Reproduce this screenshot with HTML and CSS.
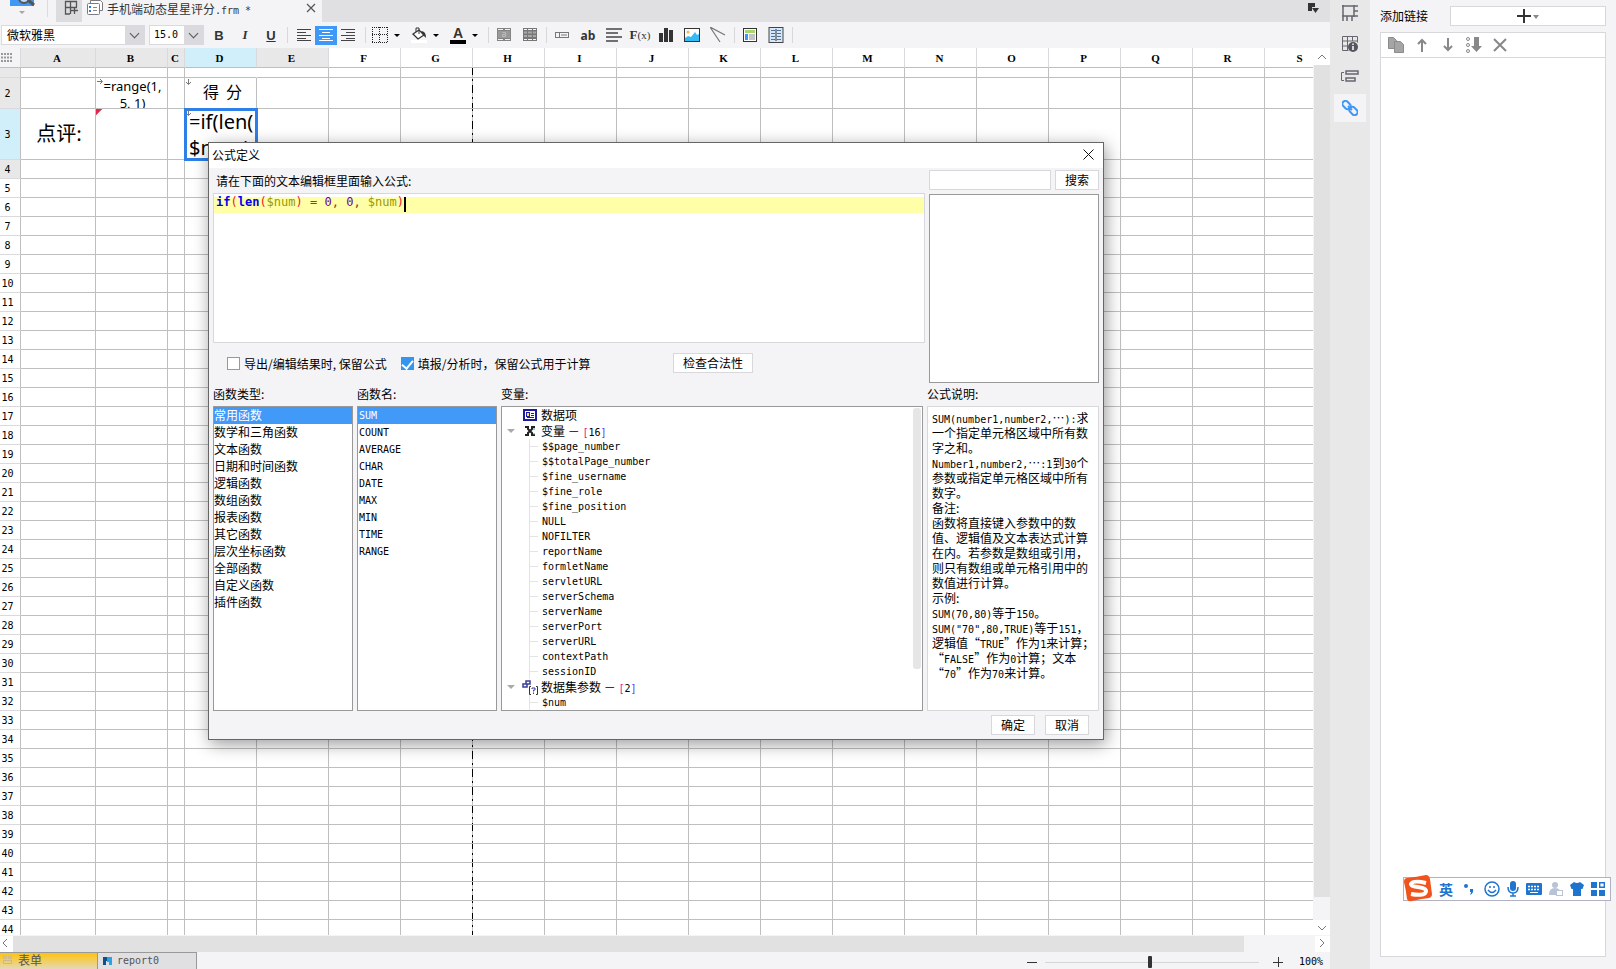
FILE: index.html
```html
<!DOCTYPE html>
<html lang="zh-CN">
<head>
<meta charset="utf-8">
<title>手机端动态星星评分.frm</title>
<link rel="stylesheet" href="styles.css">
</head>
<body>
<div class="app">
  <main class="workspace">
    <header class="tabbar">
      <button class="preview" aria-label="预览">
        <svg width="56" height="22" viewBox="0 0 56 22"><path d="M10 0h24v6H10z" fill="#3f98f6"/><circle cx="24" cy="-2" r="5" fill="#b9dcfb" stroke="#555" stroke-width="2"/><path d="M28 0l6 5" stroke="#555" stroke-width="3"/><path d="M19 11h6l-3 3z" fill="#a6a6aa"/><path d="M47.500 0v17" stroke="#dcdce0"/></svg>
      </button>
      <button class="newtab" aria-label="新建">
        <svg width="26" height="22" viewBox="0 0 26 22" fill="none" stroke="#555" stroke-width="1.300"><path d="M9 1.500h12M9 7.500h12M9.500 1v13H14M14.500 1v13M20.500 1v6M18.500 7v7M15 10.500h7"/></svg>
      </button>
      <div class="doctab">
        <svg width="18" height="18" viewBox="0 0 18 18" fill="#fff" stroke="#7b7b80"><path d="M4.500 1.500h10l2 2v8h-12z"/><rect x="1.500" y="4.500" width="12" height="11" rx="1"/><path d="M7 8.500h4M7 11.500h4" stroke="#888"/><path d="M3 7h2v2H3zM3 11h2v2H3z" fill="#2e7bd0" stroke="none"/></svg>
        <span>手机端动态星星评分<span class="m">.frm *</span></span>
        <button class="closetab" aria-label="关闭"><svg width="10" height="10" viewBox="0 0 10 10"><path d="M1 1l8 8M9 1L1 9" stroke="#555" stroke-width="1.200"/></svg></button>
      </div>
      <svg class="more" width="14" height="12" viewBox="0 0 14 12"><path d="M1 0h7v4H5v4H1z" fill="#333"/><path d="M5 5h7l-3.500 5z" fill="#333"/></svg>
    </header>

    <div class="toolbar">
      <div class="combo combo-font"><select aria-label="字体"><option>微软雅黑</option></select></div>
      <div class="combo combo-size"><select aria-label="字号" class="m"><option>15.0</option></select></div>
      <button class="t26 bold">B</button><button class="t26 ital">I</button><button class="t26 under">U</button>
      <i class="sep"></i>
      <div class="aligns">
        <button aria-label="左对齐"><svg width="14" height="14" viewBox="0 0 14 14" stroke="#444"><path d="M0 1.500h14M0 4.500h9M0 7.500h14M0 10.500h9M0 12.500h14"/></svg></button>
        <button class="on" aria-label="居中"><svg width="14" height="14" viewBox="0 0 14 14" stroke="#fff"><path d="M0 1.500h14M3 4.500h8M0 7.500h14M3 10.500h8M0 12.500h14"/></svg></button>
        <button aria-label="右对齐"><svg width="14" height="14" viewBox="0 0 14 14" stroke="#444"><path d="M0 1.500h14M5 4.500h9M0 7.500h14M5 10.500h9M0 12.500h14"/></svg></button>
      </div>
      <i class="sep"></i>
      <button class="drop" aria-label="边框"><svg width="16" height="16" viewBox="0 0 16 16" fill="none" stroke="#222" stroke-dasharray="1 1"><path d="M.5 0v16M15.500 0v16M0 .5h16M0 15.500h16M7.500 0v16M0 7.500h16"/></svg><svg class="caret" width="6" height="3" viewBox="0 0 6 3"><path d="M0 0h6L3 3z"/></svg></button>
      <button class="drop" aria-label="填充"><svg width="16" height="16" viewBox="0 0 16 16"><path d="M0 13h16v3H0z" fill="#fff"/><path d="M2 7l6-4 5 5-6 4z" fill="#fff" stroke="#333" stroke-width="1.300"/><path d="M5 5V1h3v6" fill="none" stroke="#333"/><path d="M10 4q5 0 5 7l-3-3z" fill="#333"/></svg><svg class="caret" width="6" height="3" viewBox="0 0 6 3"><path d="M0 0h6L3 3z"/></svg></button>
      <button class="drop" aria-label="字色"><span class="fontcolor">A</span><svg class="caret" width="6" height="3" viewBox="0 0 6 3"><path d="M0 0h6L3 3z"/></svg></button>
      <i class="sep"></i>
      <button class="t26" aria-label="合并"><svg width="14" height="14" viewBox="0 0 14 14"><path d="M0 0h14v13H0z" fill="#848484"/><path d="M1 1.500h5M8 1.500h5M1 11.500h5M8 11.500h5" stroke="#f0f0f2"/><rect x="1" y="3" width="12" height="7" fill="#999"/><path d="M5.500 4.500h3v4h-3v-2h3" fill="none" stroke="#bbb"/></svg></button>
      <button class="t26" aria-label="拆分"><svg width="14" height="14" viewBox="0 0 14 14"><path d="M0 0h14v13H0z" fill="#777"/><path d="M1 1.500h3M5 1.500h4M10 1.500h3M1 11.500h3M5 11.500h4M10 11.500h3" stroke="#f4f4f7"/><path d="M1 4.500h3M5 4.500h4M10 4.500h3M1 8h3M5 8h4M10 8h3" stroke="#a8a8a8" stroke-width="2"/></svg></button>
      <i class="sep"></i>
      <button class="t26" aria-label="控件"><svg width="14" height="6" viewBox="0 0 14 6" fill="none" stroke="#777"><rect x=".5" y=".5" width="13" height="5"/><path d="M4.500 1v4M6 3h6"/></svg></button>
      <button class="t26 ab">ab</button>
      <button class="t26" aria-label="段落"><svg width="16" height="14" viewBox="0 0 16 14" stroke="#444" stroke-width="1.500"><path d="M0 1h16M0 5h12M0 9h16M0 13h12"/></svg></button>
      <button class="t26 fx">F<small>(x)</small></button>
      <button class="t26" aria-label="图表"><svg width="14" height="14" viewBox="0 0 14 14" fill="#333"><path d="M0 5h4v9H0zM5 0h4v14H5zM10 2h4v12h-4z"/></svg></button>
      <button class="t26" aria-label="图片"><svg width="16" height="14" viewBox="0 0 16 14"><rect x=".5" y=".5" width="15" height="13" fill="#fff" stroke="#333"/><circle cx="4" cy="4" r="1.500" fill="#f6b64b"/><path d="M1 10l3-2 3 1 4-5 2 3 2-1v7H1z" fill="#36baf5"/></svg></button>
      <button class="t26" aria-label="斜线"><svg width="16" height="16" viewBox="0 0 16 16" stroke="#777" stroke-width="1.200"><path d="M0 0l15 8M0 0l10 15"/></svg></button>
      <i class="sep"></i>
      <button class="t26" aria-label="子报表"><svg width="14" height="14" viewBox="0 0 14 14"><rect x=".5" y=".5" width="13" height="13" fill="#fff" stroke="#333"/><path d="M2 2h10v3H2z" fill="#a5d86a"/><path d="M2 6h3v6H2z" fill="#3f98f6"/><path d="M6 6h6v6H6z" fill="#c4c4c8"/></svg></button>
      <button class="t26" aria-label="列表"><svg width="16" height="16" viewBox="0 0 16 16"><rect x="1" y=".5" width="14" height="15" fill="#d4e7fb" stroke="#444"/><path d="M8 2v12" stroke="#333"/><path d="M3 3.500h4M3 6.500h4M3 9.500h4M3 12.500h4M9 3.500h4M9 6.500h4M9 9.500h4M9 12.500h4" stroke="#4f7390"/></svg></button>
      <i class="sep"></i>
    </div>

    <section class="sheet">
      <div class="cells"><table class="grid" id="grid"></table></div>
      <div class="vscroll">
        <button aria-label="向上"><svg width="10" height="6" viewBox="0 0 10 6"><path d="M1 5l4-4 4 4" fill="none" stroke="#777"/></svg></button>
        <div class="vthumb"></div>
        <button aria-label="向下"><svg width="10" height="6" viewBox="0 0 10 6"><path d="M1 1l4 4 4-4" fill="none" stroke="#777"/></svg></button>
      </div>
    </section>
    <div class="hscroll">
      <button aria-label="向左"><svg width="6" height="10" viewBox="0 0 6 10"><path d="M5 1L1 5l4 4" fill="none" stroke="#777"/></svg></button>
      <div class="hthumb"></div>
      <button aria-label="向右"><svg width="6" height="10" viewBox="0 0 6 10"><path d="M1 1l4 4-4 4" fill="none" stroke="#777"/></svg></button>
    </div>
    <footer class="bottom">
      <button class="sheettab current"><svg width="10" height="8" viewBox="0 0 10 8" fill="none" stroke="#c9b98c"><path d="M.5.5h3v2h-3zM5.500.5h3v2h-3zM.5 4.500h8v3h-8z"/></svg>表单</button>
      <button class="sheettab"><svg width="9" height="8" viewBox="0 0 9 8"><path d="M0 0h4v4H3v4H0z" fill="#0f4f8f"/><path d="M4 0h5v8H6V5H4z" fill="#2aa3df"/></svg><span class="m">report0</span></button>
      <div class="zoom">
        <button aria-label="缩小"><svg width="10" height="10" viewBox="0 0 10 10"><path d="M0 5.500h10" stroke="#333"/></svg></button>
        <input type="range" min="0" max="100" value="49" aria-label="缩放">
        <button aria-label="放大"><svg width="10" height="10" viewBox="0 0 10 10"><path d="M0 5.500h10M5.500 0v10" stroke="#333"/></svg></button>
        <span class="m">100%</span>
      </div>
    </footer>
  </main>

  <nav class="rail">
    <button aria-label="单元格属性"><svg width="16" height="16" viewBox="0 0 16 16" fill="none" stroke="#666670" stroke-width="1.500"><path d="M0 1h16M1 0v16M0 11h16M12 0v12M12 6h4M5 11v5M10 11v5"/></svg></button>
    <button aria-label="单元格元素"><svg width="16" height="16" viewBox="0 0 16 16" fill="none" stroke="#666670"><path d="M.5.5h15v6M.5.5v14h6M0 5h15M0 10h6M5.500 0v14M10.500 0v5" /><circle cx="11" cy="11" r="5" fill="#555560" stroke="none"/><path d="M11 7.500v1.500M11 10v4" stroke="#fff" stroke-width="1.500"/></svg></button>
    <button aria-label="浮动元素"><svg width="18" height="13" viewBox="0 0 18 13" fill="none" stroke="#666670"><path d="M3 2.500H.5v8H3"/><path d="M5 1h12v3H5zM5 8h9v3H5z" stroke-width="1.500"/></svg></button>
    <button class="on" aria-label="超级链接"><svg width="16" height="16" viewBox="0 0 16 16" fill="none" stroke="#3f98f6" stroke-width="2"><rect x="0" y="2" width="9" height="6" rx="3" transform="rotate(45 4.500 5)"/><rect x="7" y="8" width="9" height="6" rx="3" transform="rotate(45 11.500 11)"/><path d="M6 6l4 4"/></svg></button>
  </nav>

  <aside class="panel">
    <div class="addrow"><span>添加链接</span>
      <button aria-label="添加"><svg width="22" height="14" viewBox="0 0 22 14"><path d="M0 7h14M7 0v14" stroke="#333" stroke-width="2"/><path d="M16 6h6l-3 4z" fill="#888"/></svg></button>
    </div>
    <div class="linkbox">
      <div class="linktools">
        <button aria-label="复制"><svg width="16" height="16" viewBox="0 0 16 16" fill="#a5a5a5" stroke="#8b8b8b"><path d="M.5.5h5l3 3v8h-8z"/><path d="M6.500 4.500h6l3 3v8h-9z"/></svg></button>
        <button aria-label="上移"><svg width="10" height="14" viewBox="0 0 10 14" fill="none" stroke="#888" stroke-width="2"><path d="M5 14V2M1 6l4-4 4 4"/></svg></button>
        <button aria-label="下移"><svg width="10" height="14" viewBox="0 0 10 14" fill="none" stroke="#888" stroke-width="2"><path d="M5 0v12M1 8l4 4 4-4"/></svg></button>
        <button aria-label="排序"><svg width="16" height="16" viewBox="0 0 16 16" fill="none" stroke="#888"><circle cx="2" cy="2" r="1.500"/><circle cx="2" cy="8" r="1.500"/><circle cx="2" cy="14" r="1.500"/><path d="M8 0h5v9h3l-5.500 6L5 9h3z" fill="#888" stroke="none"/></svg></button>
        <button aria-label="删除"><svg width="14" height="14" viewBox="0 0 14 14" stroke="#888" stroke-width="2"><path d="M1 1l12 12M13 1L1 13"/></svg></button>
      </div>
    </div>
  </aside>
</div>

<div class="dialog" role="dialog" aria-label="公式定义">
  <header class="dlg-title"><span>公式定义</span><button aria-label="关闭"><svg width="11" height="11" viewBox="0 0 11 11"><path d="M.5.5l10 10M10.500.5l-10 10" stroke="#111"/></svg></button></header>
  <div class="dlg-body">
    <div class="upper">
      <div class="left">
        <div class="prompt" id="prompt">请在下面的文本编辑框里面输入公式:</div>
        <div class="editor" contenteditable="true" role="textbox" aria-labelledby="prompt" spellcheck="false"><div class="code"><b>if</b><i class="r">(</i><b>len</b><i class="r">(</i><i class="v">$num</i><i class="r">)</i> <i class="o">=</i> <i class="n">0</i><i class="o">,</i> <i class="n">0</i><i class="o">,</i> <i class="v">$num</i><i class="r">)</i><i class="cursor"></i></div></div>
        <div class="options">
          <label class="check"><input type="checkbox">导出/编辑结果时, 保留公式</label>
          <label class="check"><input type="checkbox" checked>填报/分析时，保留公式用于计算</label>
          <button class="btn verify">检查合法性</button>
        </div>
      </div>
      <div class="right">
        <div class="search"><input type="text" aria-label="搜索函数"><button class="btn">搜索</button></div>
        <div class="results"></div>
      </div>
    </div>
    <div class="lower">
      <section class="c140"><h2>函数类型:</h2>
        <ul class="list" role="listbox"><li class="sel">常用函数</li><li>数学和三角函数</li><li>文本函数</li><li>日期和时间函数</li><li>逻辑函数</li><li>数组函数</li><li>报表函数</li><li>其它函数</li><li>层次坐标函数</li><li>全部函数</li><li>自定义函数</li><li>插件函数</li></ul></section>
      <section class="c140"><h2>函数名:</h2>
        <ul class="list names m" role="listbox"><li class="sel">SUM</li><li>COUNT</li><li>AVERAGE</li><li>CHAR</li><li>DATE</li><li>MAX</li><li>MIN</li><li>TIME</li><li>RANGE</li></ul></section>
      <section class="ctree"><h2>变量:</h2>
        <div class="treebox">
          <ul class="tree">
            <li class="branch"><i class="tog"></i><svg width="14" height="12" viewBox="0 0 14 12"><rect x="1" y="1" width="12" height="10" fill="#fff" stroke="#1c1c9c" stroke-width="2"/><rect x="3.500" y="3.500" width="3" height="4" fill="#ffe14a" stroke="#1c1c9c"/><path d="M8 4.500h3M8 6.500h3M4 8.500h7" stroke="#1c1c9c"/></svg><span>数据项</span></li>
            <li class="branch"><i class="tog open"></i><svg width="14" height="12" viewBox="0 0 14 12" fill="none" stroke="#222" stroke-width="2"><path d="M2 2h3v2l2 2-2 2v2H2M12 2H9v2L7 6l2 2v2h3"/><path d="M10 4h2M10 9h2" stroke="#2a9e8b" stroke-width="1"/></svg><span>变量 － <span class="m"><i class="k1">[</i>16<i class="k2">]</i></span></span></li>
            <li class="leaves"><ul class="m"><li>$$page_number</li><li>$$totalPage_number</li><li>$fine_username</li><li>$fine_role</li><li>$fine_position</li><li>NULL</li><li>NOFILTER</li><li>reportName</li><li>formletName</li><li>servletURL</li><li>serverSchema</li><li>serverName</li><li>serverPort</li><li>serverURL</li><li>contextPath</li><li>sessionID</li></ul></li>
            <li class="branch"><i class="tog open"></i><svg width="16" height="15" viewBox="0 0 16 15" fill="none"><path d="M4 1h4v3H4zM1 4h4v3H1z" stroke="#3c3c9a" stroke-width="1.500"/><path d="M9 6.500H7.500v8H9M14 6.500h1.500v8H14" stroke="#333"/><path d="M10 9V8h3v2h-1.500v1.500M11.500 12.500v1.500" stroke="#3c3c9a"/></svg><span>数据集参数 － <span class="m"><i class="k1">[</i>2<i class="k2">]</i></span></span></li>
            <li class="leaves"><ul class="m"><li>$num</li></ul></li>
          </ul>
          <div class="tthumb"></div>
        </div></section>
      <section class="cdesc"><h2>公式说明:</h2>
        <p class="desc"><span class="m">SUM(number1,number2,</span>…<span class="m">):</span>求<br>一个指定单元格区域中所有数<br>字之和。<br><span class="m">Number1,number2,</span>…<span class="m">:1</span>到<span class="m">30</span>个<br>参数或指定单元格区域中所有<br>数字。<br>备注:<br>函数将直接键入参数中的数<br>值、逻辑值及文本表达式计算<br>在内。若参数是数组或引用，<br>则只有数组或单元格引用中的<br>数值进行计算。<br>示例:<br><span class="m">SUM(70,80)</span>等于<span class="m">150</span>。<br><span class="m">SUM("70",80,TRUE)</span>等于<span class="m">151</span>，<br>逻辑值“<span class="m">TRUE</span>”作为<span class="m">1</span>来计算；<br>“<span class="m">FALSE</span>”作为<span class="m">0</span>计算；文本<br>“<span class="m">70</span>”作为<span class="m">70</span>来计算。</p></section>
    </div>
    <div class="actions"><button class="btn">确定</button><button class="btn">取消</button></div>
  </div>
</div>

<div class="ime">
  <svg class="sogou" width="30" height="28" viewBox="0 0 30 28"><path d="M4 4Q14 3 23 1q3 0 4 4 1 8 2 15 0 3-3 4-9 1-17 3-4 1-5-2Q3 16 1 8q0-4 3-4z" fill="#f0531c"/><path d="M23 9Q10 6 8 10c0 4 15 2 15 7 0 5-10 4-15 3" fill="none" stroke="#fff" stroke-width="4"/></svg>
  <span class="ying">英</span>
  <svg width="16" height="16" viewBox="0 0 16 16" fill="#1f74ce"><circle cx="5" cy="5" r="2"/><path d="M9 8h3q1 4-3 6 1-2 1-3H9z"/></svg>
  <svg width="16" height="16" viewBox="0 0 16 16" fill="none" stroke="#1f74ce" stroke-width="1.500"><circle cx="8" cy="8" r="7"/><path d="M6 5v2M10 5v2M4 9q4 5 8 0"/></svg>
  <svg width="12" height="16" viewBox="0 0 12 16"><rect x="3" width="6" height="10" rx="3" fill="#1f74ce"/><path d="M1 6q0 6 5 6t5-6M6 12v3M3 15h6" fill="none" stroke="#1f74ce" stroke-width="1.500"/></svg>
  <svg width="16" height="12" viewBox="0 0 16 12"><rect width="16" height="12" rx="1" fill="#1f74ce"/><path d="M2 3.500h12M2 6.500h12" stroke="#fff" stroke-width="1.500" stroke-dasharray="2 1"/><path d="M4 9.500h8" stroke="#fff"/></svg>
  <svg width="14" height="16" viewBox="0 0 14 16"><circle cx="6" cy="4" r="3" fill="#b8c3d6"/><path d="M0 14q0-7 6-7t6 7z" fill="#b8c3d6"/><rect x="7.500" y="9.500" width="6" height="5" fill="#fff" stroke="#b8c3d6"/></svg>
  <svg width="14" height="14" viewBox="0 0 14 14"><path d="M4 0q3 2 6 0l4 3-1.500 4H11v7H3V7H1.500L0 3z" fill="#1f74ce"/></svg>
  <svg width="14" height="14" viewBox="0 0 14 14" fill="#1f74ce"><path d="M0 0h6v6H0zM0 8h6v6H0zM8 8h6v6H8z"/><path d="M8.700.7h4.600v4.600H8.700z" fill="none" stroke="#1f74ce" stroke-width="1.400"/></svg>
</div>
<script src="grid.js"></script>
</body>
</html>
```
FILE: grid.js
```js
const columns = 'ABCDEFGHIJKLMNOPQRS'.split('');
const right = '<svg class="mark" width="6" height="6" viewBox="0 0 6 6"><path d="M0 2.500h5M3 0l2.500 2.500L3 5" fill="none" stroke="#777"/></svg>';
const down = '<svg class="mark" width="6" height="6" viewBox="0 0 6 6"><path d="M2.500 0v5M0 3l2.500 2.500L5 3" fill="none" stroke="#777"/></svg>';
const content = {
  B2: `<div class="cell h30 formula">${right}=range(1,<br>5, 1)</div>`,
  D2: `<div class="cell h30 score">${down}得&nbsp; 分</div>`,
  A3: '<div class="cell h50 review">点评:</div>',
  B3: '<div class="cell h50 flag"></div>',
  D3: `<div class="cell h50 big">${down}=if(len(<br>$num)</div>`
};
let html = '<colgroup><col class="w21"><col class="w75"><col class="w72"><col class="w17">' +
  '<col class="w72"><col class="w72"><col class="w72"><col class="w72 page-edge">' +
  '<col class="w72">'.repeat(12) + '</colgroup><tr class="head"><th class="corner">' +
  '<svg width="11" height="9" viewBox="0 0 11 9" stroke="#999" stroke-width="2" stroke-dasharray="2 1"><path d="M0 1h11M0 4.500h11M0 8h11"/></svg></th>';
columns.forEach((c, i) => {
  html += `<th class="${c === 'D' ? 'cur' : i < 5 ? 'used' : ''}">${c}</th>`;
});
html += '</tr>';
for (let r = 1; r <= 44; r++) {
  html += `<tr class="r${r < 4 ? r : ''}"><th class="${r === 3 ? 'cur' : r < 5 ? 'used' : ''}">${r > 1 ? r : ''}</th>`;
  columns.forEach(c => {
    const id = c + r;
    const cls = id === 'D3' ? 'active' : id === 'D1' ? 'open' : c === 'G' ? 'page' : '';
    html += `<td class="${cls}">${content[id] || ''}</td>`;
  });
  html += '</tr>';
}
document.getElementById('grid').innerHTML = html;
```
FILE: styles.css
```css
* { box-sizing: border-box; }
body { margin: 0; height: 100vh; overflow: hidden; position: relative; font: 12px/15px "Noto Sans CJK SC", "Liberation Sans", sans-serif; color: #000; background: #f4f4f7; }
button, input, select { font: inherit; color: inherit; margin: 0; padding: 0; border: 0; background: none; border-radius: 0; }
button { display: flex; align-items: center; justify-content: center; flex: none; }
svg { display: block; flex: none; }
i { font-style: normal; }
ul { list-style: none; margin: 0; padding: 0; }
h2 { font: inherit; margin: 0; }
.m { font-family: "DejaVu Sans Mono", monospace; font-size: 10px; }
span.m { line-height: 10px; }

.app { display: flex; height: 100%; }
.workspace { flex: 1; min-width: 0; display: flex; flex-direction: column; }
.tabbar { height: 22px; flex: none; display: flex; background: #e0e0e2; overflow: hidden; }
.preview { width: 56px; background: #f4f4f7; }
.newtab { width: 26px; background: #dcdcdf; }
.doctab { width: 240px; padding: 0 6px 6px 4px; display: flex; align-items: center; gap: 3px; background: #f4f4f7; color: #333; }
.closetab { margin-left: auto; }
.more { margin: 3px 9px 0 auto; }

.toolbar { height: 26px; flex: none; display: flex; align-items: center; padding-left: 1px; overflow: hidden; }
.combo { height: 20px; flex: none; border: 1px solid #dadade; background: #fff; position: relative; }
.combo select { appearance: none; width: 100%; height: 17px; padding-left: 5px; line-height: 17px; display: block; }
.combo::after { content: ""; position: absolute; right: 0; top: 0; width: 19px; height: 18px; background: #dadade; pointer-events: none; }
.combo::before { content: ""; position: absolute; z-index: 1; right: 6px; top: 4px; width: 6px; height: 6px; border: solid #555; border-width: 0 1px 1px 0; transform: rotate(45deg); pointer-events: none; }
.combo-font { width: 144px; margin-right: 4px; }
.combo-size { width: 55px; margin-right: 2px; }
.combo-size select { padding-left: 4px; }
.t26 { width: 26px; height: 22px; color: #333; }
.bold, .ital, .under { font: bold 13px "Liberation Sans", sans-serif; }
.ital { font-family: "Liberation Serif", serif; font-style: italic; }
.under { text-decoration: underline; }
.ab { font: bold 12px "Open Sans", sans-serif; }
.fx { font: bold 13px "Liberation Serif", serif; }
.fx small { font-size: 11px; font-weight: normal; }
.sep { width: 6px; flex: none; display: flex; justify-content: center; }
.sep::before { content: ""; width: 1px; height: 16px; background: #d8d8dc; }
.aligns { display: flex; padding: 0 3px; }
.aligns button { width: 22px; height: 19px; }
.aligns .on { background: #3f98f6; }
.drop { width: 39px; gap: 6px; justify-content: flex-start; padding-left: 4px; }
.fontcolor { width: 16px; border-bottom: 4px solid #000; font: bold 14px/13px "Liberation Sans", sans-serif; color: #333; text-align: center; }

.sheet { flex: 1; min-height: 0; display: flex; }
.cells { flex: 1; min-width: 0; overflow: hidden; background: #fff; height: calc(100% - 1px); }
.grid { table-layout: fixed; border-collapse: separate; border-spacing: 0; width: 1317px; }
.w21 { width: 21px; } .w75 { width: 75px; } .w72 { width: 72px; } .w17 { width: 17px; }
.grid th, .grid td { padding: 0; height: 19px; border: solid #bfbfbf; border-width: 0 1px 1px 0; line-height: 17px; font-weight: normal; overflow: hidden; }
.grid th { font-family: "DejaVu Sans Mono", monospace; font-size: 10px; border-bottom-color: #dadade; text-align: center; padding-right: 5px; background: #fff; }
.grid .head th { height: 20px; font: bold 11px/17px "Liberation Serif", serif; border-color: #dadade #dadade #bfbfbf; padding: 2px 2px 0 0; }
.grid .head .corner { background: #f4f4f7; padding: 0; }
.grid th.used { background: #e8e8e8; }
.grid th.cur, .grid .head th.cur { background: #d0effa; }
.grid .corner svg { margin-left: 1px; }
.grid .r1 th, .grid .r1 td { height: 10px; line-height: 8px; }
.grid .r2 th, .grid .r2 td { height: 31px; }
.grid .r3 th, .grid .r3 td { height: 51px; }
.grid .open { border-right-color: #fff; }
.grid .page { border-right: 0; }
.page-edge { background: repeating-linear-gradient(#000 0 8px, #bfbfbf 8px 12px, #000 12px 14px, #bfbfbf 14px 18px) right 19px / 1px 100% no-repeat; }
.cell { position: relative; overflow: hidden; text-align: center; }
.mark { position: absolute; left: 1px; top: 1px; }
.h30 { height: 30px; } .h50 { height: 50px; }
.cell.formula { font: 13px/17px "Noto Sans", "Open Sans", sans-serif; padding-left: 2px; }
.score { font-size: 16px; line-height: 27px; padding-left: 4px; }
.review { font-size: 20px; line-height: 47px; padding-left: 2px; }
.big { font: 20px/26px "Noto Sans", sans-serif; text-align: left; padding-left: 4px; white-space: nowrap; }
.flag { background: linear-gradient(135deg, #e0294a 4px, transparent 5px); }
.grid .active { outline: 3px solid #2f7fe8; outline-offset: -2px; position: relative; }

.vscroll { width: 17px; display: flex; flex-direction: column; background: #f4f4f7; }
.vscroll button { height: 17px; background: #fff; }
.vscroll button:last-child { height: 15px; margin: auto 0 1px; }
.vthumb { background: #e1e1e1; flex: 0 1 832px; margin-left: 1px; }
.hscroll { height: 16px; flex: none; display: flex; }
.hscroll button { background: #fff; width: 13px; padding: 0 4px 2px 0; }
.hthumb { background: #e1e1e1; flex: 0 1 1231px; }
.hscroll button:last-child { width: 15px; margin-left: auto; padding-right: 2px; }
.bottom { height: 17px; flex: none; display: flex; overflow: hidden; }
.sheettab { width: 100px; height: 17px; border: 1px solid #999; border-bottom: 0; background: #e0e0e2; color: #555; justify-content: flex-start; gap: 5px; padding: 0 0 1px 5px; }
.sheettab.current { width: 97px; border-width: 1px 0 0; background: linear-gradient(#ffc30b, #e3d9b8); padding: 0 0 3px 3px; }
.zoom { margin-left: auto; display: flex; align-items: center; padding: 3px 7px 0 0; }
.zoom input { appearance: none; width: 214px; height: 14px; margin: 0 14px 0 8px; background: linear-gradient(#d5d5d8, #d5d5d8) center / 100% 1px no-repeat; }
.zoom input::-webkit-slider-thumb { appearance: none; width: 4px; height: 12px; background: #333; border-radius: 1px; }
.zoom span { margin-left: 16px; }

.rail { width: 40px; flex: none; background: #e8e8e8; display: flex; flex-direction: column; align-items: center; gap: 4px; }
.rail button { width: 32px; height: 28px; }
.rail .on { background: #f4f4f7; }
.rail button:first-child { height: 26px; }
.panel { width: 246px; flex: none; padding: 6px 10px 12px; display: flex; flex-direction: column; gap: 6px; }
.addrow { display: flex; align-items: center; gap: 22px; height: 20px; }
.addrow span { padding-bottom: 1px; }
.addrow button { flex: 1; height: 20px; border: 1px solid #d8d8dc; background: #fff; }
.linkbox { flex: 1; border: 1px solid #d8d8dc; background: #fff; }
.linktools { height: 25px; border-bottom: 1px solid #d8d8dc; display: flex; align-items: center; padding-left: 2px; }
.linktools button { width: 26px; height: 24px; }

.dialog { position: absolute; left: 208px; top: 142px; width: 896px; height: 598px; border: 1px solid #666; background: #f4f4f7; box-shadow: 2px 4px 16px rgba(0, 0, 0, .4); display: flex; flex-direction: column; }
.dlg-title { height: 25px; flex: none; background: #fff; display: flex; justify-content: space-between; align-items: center; padding: 0 9px 2px 3px; }
.dlg-body { flex: 1; display: flex; flex-direction: column; padding: 0 4px 4px; }
.upper { display: flex; height: 215px; gap: 4px; margin-bottom: 4px; }
.left { flex: 1; display: flex; flex-direction: column; }
.prompt { height: 25px; line-height: 25px; padding-left: 3px; }
.editor { height: 150px; border: 1px solid #d8d8dc; background: #fff; padding-top: 3px; outline: 0; }
.code { height: 16px; background: #ffffa8; font: 12px/10px "DejaVu Sans Mono", monospace; padding-left: 2px; white-space: pre; }
.code b { color: #0000f0; }
.code .r { color: #e22; } .code .v { color: #990; } .code .o { color: #804040; } .code .n { color: #6a00b0; }
.cursor { display: inline-block; vertical-align: top; width: 2px; height: 15px; background: #000; }
.options { flex: 1; display: flex; align-items: center; padding-left: 14px; gap: 14px; }
.check { display: flex; align-items: center; gap: 4px; white-space: nowrap; }
.check input { appearance: none; width: 13px; height: 13px; border: 1px solid #999; background: #fff; display: flex; justify-content: center; }
.check input:checked { background: #3296f0; border-color: #3296f0; }
.check input:checked::before { content: ""; width: 5px; height: 9px; border: solid #fff; border-width: 0 2px 2px 0; transform: rotate(40deg); }
.btn { height: 20px; border: 1px solid #d8d8dc; background: #fff; width: 44px; padding-bottom: 2px; }
.verify { width: 80px; margin: 0 172px 0 auto; }
.right { width: 170px; display: flex; flex-direction: column; gap: 4px; padding-top: 2px; }
.search { display: flex; gap: 4px; height: 20px; }
.search input { flex: 1; min-width: 0; border: 1px solid #d8d8dc; background: #fff; }
.results { height: 189px; border: 1px solid #999; background: #fff; }
.lower { display: flex; gap: 4px; flex: 1; }
.lower section { display: flex; flex-direction: column; }
.lower h2 { height: 19px; line-height: 13px; }
.c140 { width: 140px; }
.ctree { flex: 1; }
.cdesc { width: 172px; }
.list, .treebox { flex: 1; border: 1px solid #999; background: #fff; }
.list li { height: 17px; line-height: 15px; }
.list.names li { line-height: 17px; padding-left: 1px; }
.list .sel { background: #4199f8; color: #fff; }
.treebox { display: flex; justify-content: space-between; overflow: hidden; }
.tree { padding-left: 5px; }
.branch { height: 16px; display: flex; align-items: center; gap: 3px; white-space: pre; }
.branch > svg { width: 16px; }
.branch > span { padding-bottom: 2px; }
.tog { width: 12px; height: 16px; flex: none; display: flex; align-items: center; }
.tog.open::before { content: ""; border: solid transparent; border-width: 4px 4px 0; border-top-color: #aaa; }
.k1 { color: #f08; } .k2 { color: #63f; }
.leaves { padding-left: 22px; }
.leaves li { height: 15px; line-height: 15px; display: flex; align-items: center; gap: 4px; border-left: 1px solid #e4e4e6; }
.leaves li::before { content: ""; width: 8px; height: 1px; background: #e4e4e6; }
.tthumb { width: 8px; height: 261px; margin: 1px; border-radius: 3px; background: #e6e6e6; }
.desc { flex: 1; margin: 0; border: 1px solid #d8d8dc; background: #fff; padding: 3px 0 0 4px; line-height: 15px; white-space: nowrap; }
.actions { display: flex; justify-content: flex-end; gap: 10px; padding: 4px 10px 0 0; height: 24px; }

.ime { position: absolute; right: 5px; bottom: 68px; height: 24px; border: 1px solid #b0b2c4; background: #fff; display: flex; align-items: center; gap: 7px; padding-right: 5px; }
.sogou { margin: -2px 0 0 -1px; }
.ying { color: #1f74ce; font-weight: bold; font-size: 14px; margin: 0 1px 0 -1px; }
```
